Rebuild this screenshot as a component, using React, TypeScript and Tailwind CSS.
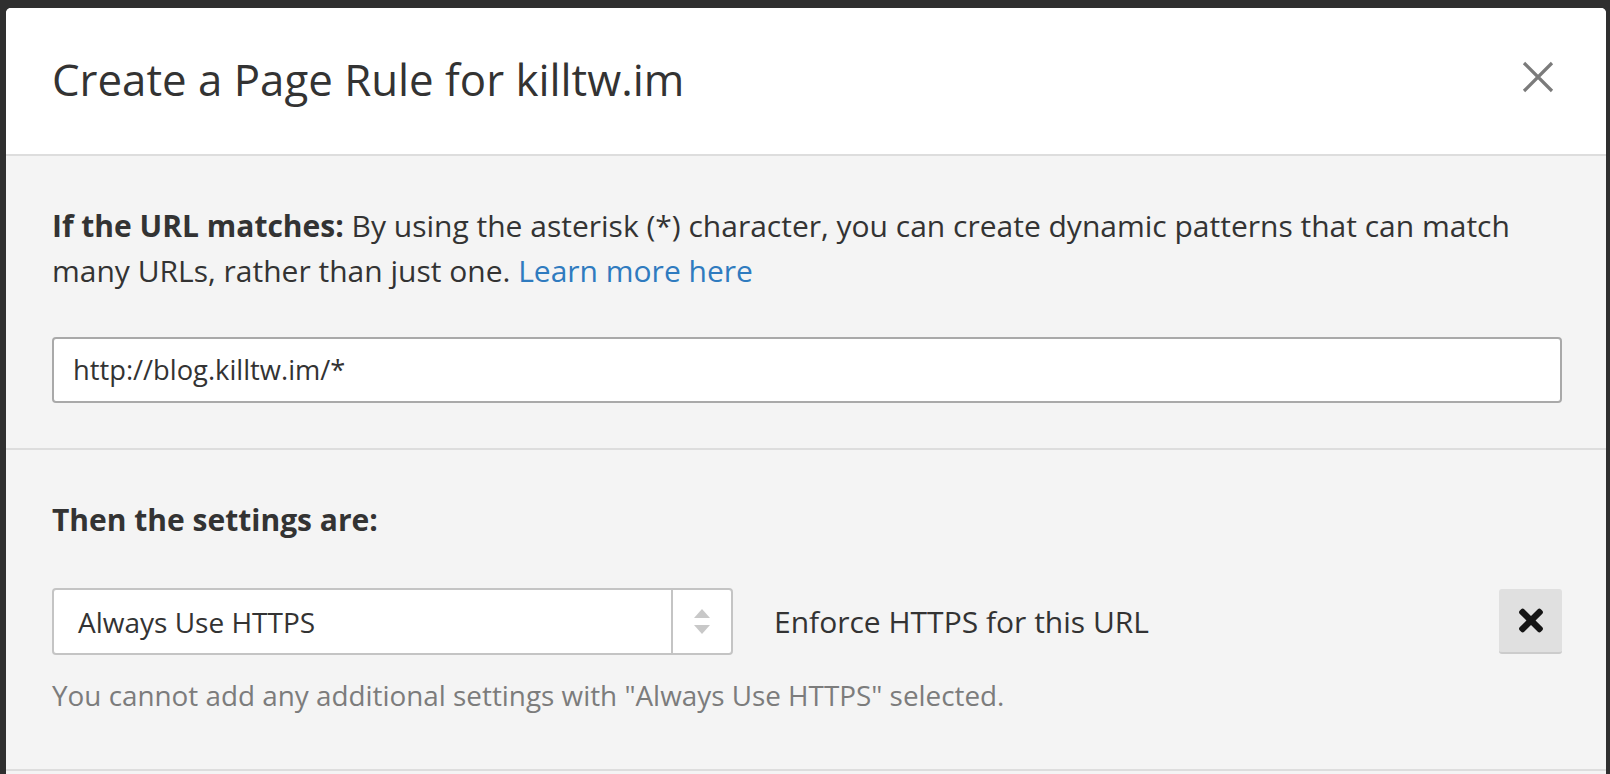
import React from "react";

export default function App() {
  return (
    <div
      className="w-[1610px] h-[774px] overflow-hidden bg-[#2f2f2f] pt-[8px] pl-[6px] pr-[4px]"
      style={{ fontFamily: '"Open Sans", "Liberation Sans", sans-serif' }}
    >
      <div className="w-[1600px] rounded-t-[5px] overflow-hidden bg-[#f4f4f4]">
        {/* Header */}
        <div className="h-[146px] bg-white flex items-center justify-between pl-[46px] pr-[52px] border-b-2 border-[#dddddd] box-content">
          <h1 className="text-[43.8px] font-normal text-[#333333] leading-none -mt-[2px]">
            Create a Page Rule for killtw.im
          </h1>
          <button className="w-[32px] h-[32px] flex items-center justify-center -mt-[8px]">
            <svg width="32" height="32" viewBox="0 0 32 32">
              <path d="M2 2 L30 30 M30 2 L2 30" stroke="#7b7b7b" strokeWidth="3.2" />
            </svg>
          </button>
        </div>

        {/* Section 1 */}
        <div className="pt-[47px] pb-[45px] pl-[46px] pr-[44px] border-b-2 border-[#dddddd]">
          <p className="text-[30px] leading-[45px] text-[#333333]">
            <strong className="font-bold">If the URL matches:</strong> By using the asterisk (*) character, you can create dynamic patterns that can match many URLs, rather than just one.{" "}
            <a className="text-[#2f7bbf]">Learn more here</a>
          </p>
          <div className="mt-[44px] h-[66px] bg-white border-2 border-[#a9a9a9] rounded-[4px] flex items-center pl-[19px]">
            <span className="text-[27.3px] text-[#333333]">http://blog.killtw.im/*</span>
          </div>
        </div>

        {/* Section 2 */}
        <div className="pt-[46px] pb-[51px] pl-[46px] pr-[44px] border-b-2 border-[#dddddd]">
          <h4 className="text-[30px] leading-[48px] font-bold text-[#333333]">Then the settings are:</h4>
          <div className="mt-[44px] flex items-center">
            <div className="w-[681px] h-[67px] bg-white border-2 border-[#c4c4c4] rounded-[4px] flex items-stretch">
              <div className="flex-1 flex items-center pl-[24px] text-[28px] text-[#333333]">Always Use HTTPS</div>
              <div className="w-[60px] border-l-2 border-[#c4c4c4] flex flex-col items-center justify-center gap-[7px]">
                <svg width="16" height="9" viewBox="0 0 16 9">
                  <path d="M8 0 L16 9 L0 9 Z" fill="#c8c8c8" />
                </svg>
                <svg width="16" height="9" viewBox="0 0 16 9">
                  <path d="M0 0 L16 0 L8 9 Z" fill="#c8c8c8" />
                </svg>
              </div>
            </div>
            <div className="ml-[41px] text-[30px] text-[#333333] flex-1">Enforce HTTPS for this URL</div>
            <button className="w-[63px] h-[65px] bg-[#e0e0e0] border-b-2 border-[#cccccc] rounded-[3px] flex items-center justify-center">
              <svg width="24" height="25" viewBox="0 80 352 352">
                <path
                  d="M242.72 256l100.07-100.07c12.28-12.28 12.28-32.19 0-44.48l-22.24-22.24c-12.28-12.28-32.19-12.28-44.48 0L176 189.28 75.930 89.21c-12.28-12.28-32.19-12.28-44.48 0L9.21 111.45c-12.28 12.28-12.28 32.19 0 44.48L109.28 256 9.21 356.07c-12.28 12.28-12.28 32.19 0 44.48l22.24 22.24c12.28 12.28 32.2 12.28 44.48 0L176 322.72l100.07 100.07c12.28 12.28 32.2 12.28 44.48 0l22.24-22.240c12.28-12.28 12.28-32.19 0-44.48L242.72 256z"
                  fill="#151515"
                />
              </svg>
            </button>
          </div>
          <p className="mt-[18px] text-[27.85px] leading-[45px] text-[#7c7c7c]">
            You cannot add any additional settings with "Always Use HTTPS" selected.
          </p>
        </div>
        <div className="h-[40px]" />
      </div>
    </div>
  );
}
